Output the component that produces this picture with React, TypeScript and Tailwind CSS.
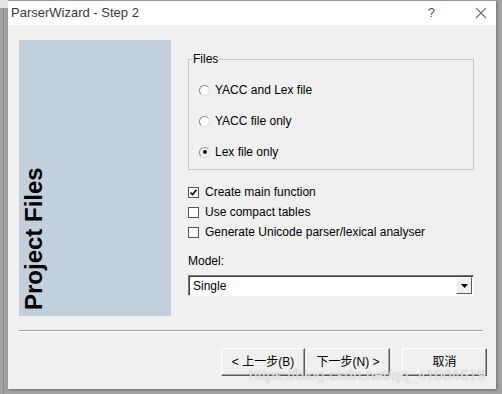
import React from "react";

const ui = { fontFamily: '"Liberation Sans", "Noto Sans CJK SC", sans-serif' };

function Radio({ checked, label }: { checked?: boolean; label: string }) {
  return (
    <div className="flex items-center h-[16px]">
      <span className="relative w-[11px] h-[11px] rounded-full bg-white border border-t-[#8a8a8a] border-l-[#8a8a8a] border-r-[#dcdcdc] border-b-[#dcdcdc] flex items-center justify-center">
        {checked && <span className="w-[4px] h-[4px] rounded-full bg-black" />}
      </span>
      <span className="ml-[5px] text-[12px] text-black">{label}</span>
    </div>
  );
}

function Check({ checked, label }: { checked?: boolean; label: string }) {
  return (
    <div className="flex items-center h-[20px]">
      <span className="w-[11px] h-[11px] bg-white border border-[#555] flex items-center justify-center">
        {checked && (
          <svg width="9" height="9" viewBox="0 0 9 9">
            <path d="M1.5 4.5 L3.5 6.5 L7.5 1.8" stroke="#000" strokeWidth="1.6" fill="none" />
          </svg>
        )}
      </span>
      <span className="ml-[6px] text-[12px] text-black">{label}</span>
    </div>
  );
}

function Btn({ children, w }: { children: React.ReactNode; w: string }) {
  return (
    <div className={`${w} h-[28px] bg-[#f0f0f0] border border-t-white border-l-white border-r-[#5a5a5a] border-b-[#5a5a5a] shadow-[inset_-1px_-1px_0_#a0a0a0] flex items-start pt-[5px] justify-center text-[12px] leading-[16px] text-black`}>
      {children}
    </div>
  );
}

export default function App() {
  return (
    <div className="relative w-[502px] h-[394px] bg-[#a3a3a3] overflow-hidden" style={ui}>
      <div className="absolute left-0 top-0 w-[8px] h-[8px] bg-[#e6e6e6]" />
      <div className="absolute left-[3px] top-[8px] w-[1px] h-[386px] bg-[#8a8a8a]" />
      <div className="ml-[8px] mr-[6px] h-[389px] flex flex-col border-t border-[#9a9a9a] shadow-[1px_1px_3px_rgba(0,0,0,0.35)]">
        <div className="h-[24px] bg-white flex items-center pl-[3px]">
          <span className="text-[13px] text-[#3a3a3a]">ParserWizard - Step 2</span>
          <span className="ml-auto text-[13px] text-[#555] mr-[40px]">?</span>
          <svg width="12" height="12" viewBox="0 0 12 12" className="mr-[9px]">
            <path d="M1 1 L11 11 M11 1 L1 11" stroke="#707070" strokeWidth="1.1" />
          </svg>
        </div>
        <div className="flex-1 bg-[#f0f0f0] flex flex-col pl-[11px] pt-[15px]">
          <div className="flex">
            <div className="w-[152px] h-[276px] bg-[#c2cfdc] flex items-end pl-[3px] pb-[6px]">
              <div className="h-[146px] w-[24px] relative">
                <span
                  className="absolute left-0 bottom-0 origin-bottom-left -rotate-90 translate-x-[24px] whitespace-nowrap text-[24px] font-bold text-black leading-[24px]"
                  style={{ fontFamily: '"Liberation Sans", Arial, sans-serif' }}
                >
                  Project Files
                </span>
              </div>
            </div>
            <div className="ml-[17px] w-[286px] flex flex-col">
              <div className="relative mt-[19px] h-[111px] border border-[#c8c8c8] pl-[10px] pt-[22px]">
                <span className="absolute left-[3px] -top-[9px] bg-[#f0f0f0] px-[1px] text-[12px] text-black leading-[16px]">Files</span>
                <div className="flex flex-col gap-[15px]">
                  <Radio label="YACC and Lex file" />
                  <Radio label="YACC file only" />
                  <Radio checked label="Lex file only" />
                </div>
              </div>
              <div className="mt-[12px] flex flex-col">
                <Check checked label="Create main function" />
                <Check label="Use compact tables" />
                <Check label="Generate Unicode parser/lexical analyser" />
              </div>
              <div className="mt-[11px] text-[12px] text-black leading-[16px]">Model:</div>
              <div className="mt-[6px] h-[21px] w-[286px] bg-white border border-t-[#7a7a7a] border-l-[#7a7a7a] border-r-white border-b-white shadow-[inset_1px_1px_0_#3c3c3c] flex items-center">
                <span className="ml-[4px] text-[12px] text-black">Single</span>
                <div className="ml-auto mr-[1px] w-[16px] h-[17px] bg-[#f0f0f0] border border-t-white border-l-white border-r-[#5a5a5a] border-b-[#5a5a5a] flex items-center justify-center">
                  <svg width="7" height="4" viewBox="0 0 7 4">
                    <path d="M0 0 H7 L3.5 4 Z" fill="#000" />
                  </svg>
                </div>
              </div>
            </div>
          </div>
          <div className="mt-[14px] mr-[3px] h-[2px] border-t border-[#a0a0a0] border-b border-b-white w-[464px]" />
          <div className="relative mt-[16px] flex pl-[202px]">
            <Btn w="w-[84px]">&lt; 上一步(B)</Btn>
            <Btn w="w-[84px] ml-[1px]">下一步(N) &gt;</Btn>
            <Btn w="w-[85px] ml-[12px]">取消</Btn>
            <span className="absolute left-[230px] top-[19px] text-[15px] leading-[15px] tracking-[0.2px] text-white/80 whitespace-nowrap [text-shadow:0_0_1px_rgba(110,110,110,0.7)]">
              https://blog.csdn.net/qq_41004619
            </span>
          </div>
        </div>
      </div>
    </div>
  );
}
